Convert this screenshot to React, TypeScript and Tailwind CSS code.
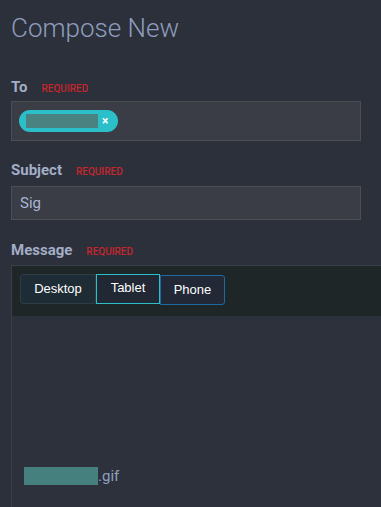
import React from 'react';

const Label = ({ text }: { text: string }) => (
  <div className="flex items-baseline h-[20px]">
    <span className="text-[15px] font-bold text-[#a3aec8] leading-none">{text}</span>
    <span className="ml-[14px] text-[10px] font-medium text-[#c4262e] uppercase leading-none">Required</span>
  </div>
);

export default function App() {
  return (
    <div className="h-[507px] w-[381px] overflow-hidden bg-[#2c303a] pl-[11px] font-['Roboto',sans-serif]">
      <h1 className="pt-[12px] text-[26px] font-light leading-[32px] text-[#8f9dbd]">Compose New</h1>

      {/* To */}
      <div className="mt-[36px]">
        <Label text="To" />
      </div>
      <div className="mt-[1px] flex h-[40px] w-[350px] items-center border border-[#4d4e52] bg-[#3a3c46] px-[7px]">
        <div className="flex h-[22px] items-center rounded-full bg-[#2bc0c9] pl-[7px] pr-[10px]">
          <div className="h-[14px] w-[72px] bg-[#4a8281]" />
          <span className="ml-[4px] text-[12px] font-bold leading-none text-white">×</span>
        </div>
      </div>

      {/* Subject */}
      <div className="mt-[22px]">
        <Label text="Subject" />
      </div>
      <div className="mt-[3px] flex h-[34px] w-[350px] items-center border border-[#4d4e52] bg-[#3a3c46] px-[8px]">
        <span className="text-[15px] text-[#aab6d2]">Sig</span>
      </div>

      {/* Message */}
      <div className="mt-[23px]">
        <Label text="Message" />
      </div>
      <div className="mt-[2px] h-[300px] border-l border-t border-[#3b3f47] bg-[#2d313b]">
        <div className="flex h-[50px] items-start bg-[#1f2628] pl-[8px] pt-[8px]">
          <button className="h-[30px] w-[76px] rounded-l-[3px] border border-[#2f3c44] bg-[#1e2c35] font-['Liberation_Sans',sans-serif] text-[13px] text-white">Desktop</button>
          <button className="h-[30px] w-[64px] border border-[#2bbfc9] bg-[#212833] pb-[2px] font-['Liberation_Sans',sans-serif] text-[13px] text-white">Tablet</button>
          <button className="mt-[1px] h-[30px] w-[65px] rounded-r-[3px] border border-[#1d6aa3] bg-[#222835] font-['Liberation_Sans',sans-serif] text-[13px] text-white">Phone</button>
        </div>
        <div className="mt-[151px] flex items-center pl-[12px]">
          <div className="h-[18px] w-[74px] bg-[#457f7e]" />
          <span className="text-[15px] leading-none text-[#8fa0c0]">.gif</span>
        </div>
      </div>
    </div>
  );
}
